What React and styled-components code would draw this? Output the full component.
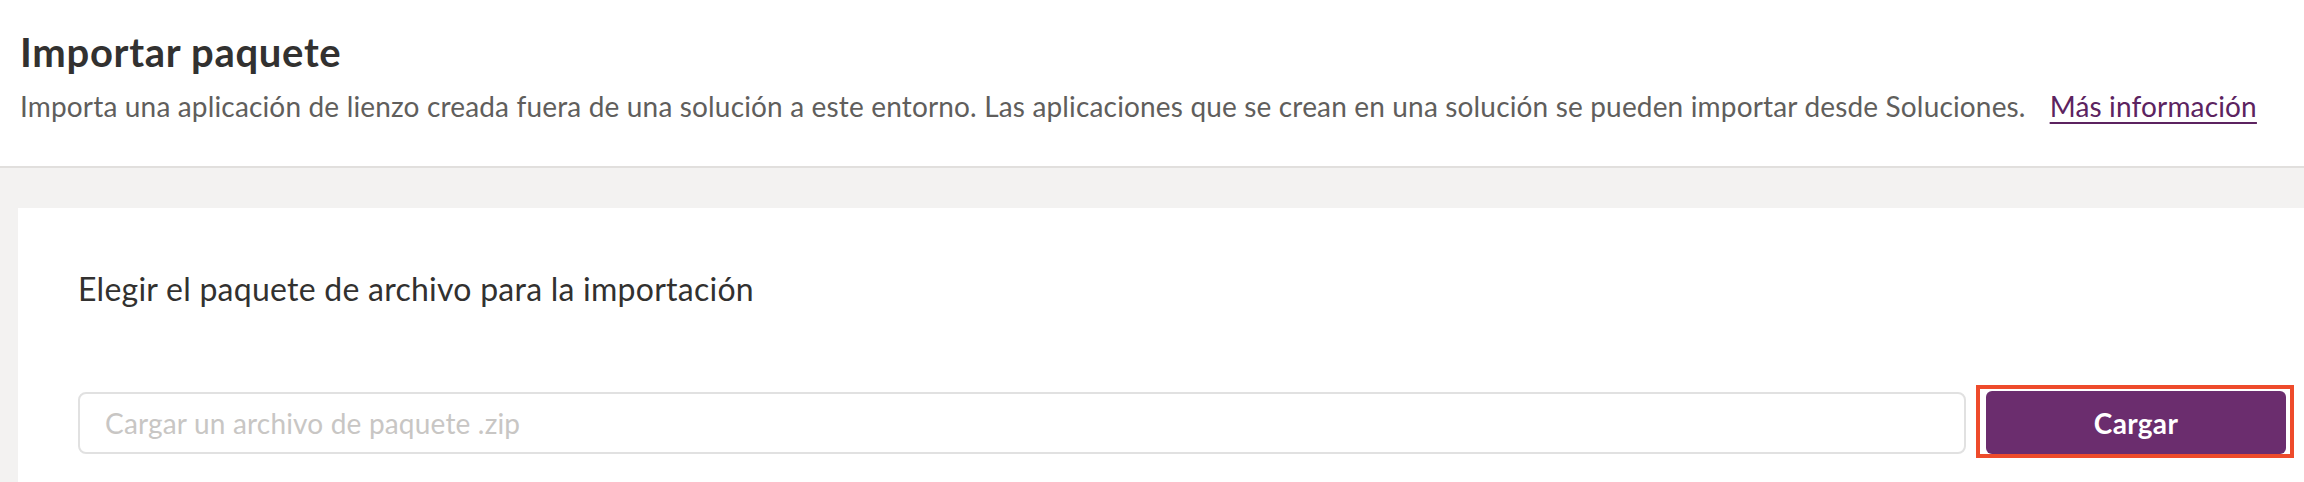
import styled, { createGlobalStyle } from "styled-components";

const GlobalStyle = createGlobalStyle`
  html, body {
    margin: 0;
    padding: 0;
    height: 482px;
    overflow: hidden;
    background: #f3f2f1;
    font-family: Lato, "Noto Sans", sans-serif;
  }
  * { box-sizing: border-box; }
`;

const Header = styled.header`
  background: #ffffff;
  border-bottom: 2px solid #e1dfdd;
  padding: 28px 20px 40px;
`;

const Title = styled.h1`
  margin: 0;
  font-size: 40px;
  line-height: 48px;
  font-weight: 700;
  letter-spacing: 0.7px;
  color: #323130;
`;

const Description = styled.p`
  margin: 10px 0 0;
  font-size: 28px;
  line-height: 40px;
  letter-spacing: 0.16px;
  color: #605e5c;
  white-space: nowrap;
`;

const MoreLink = styled.a`
  margin-left: 24px;
  color: #5c2360;
  text-decoration: underline;
  text-decoration-thickness: 2px;
  text-underline-offset: 5px;
`;

const Body = styled.main`
  padding: 40px 0 0 18px;
`;

const Card = styled.section`
  width: 2328px;
  min-height: 320px;
  background: #ffffff;
  padding: 59px 60px 60px;
`;

const Label = styled.h2`
  margin: 0 0 80px;
  font-size: 32px;
  line-height: 44px;
  font-weight: 400;
  letter-spacing: 0.25px;
  color: #323130;
`;

const Row = styled.div`
  display: flex;
  align-items: center;
  gap: 20px;
`;

const FileInput = styled.input`
  flex: 1;
  height: 62px;
  border: 2px solid #e1e1e1;
  border-radius: 8px;
  padding: 0 25px;
  font-family: inherit;
  font-size: 28px;
  letter-spacing: 0.18px;
  color: #323130;
  outline: none;

  &::placeholder {
    color: #c8c6c4;
  }
`;

const Highlight = styled.div`
  position: relative;
  display: flex;

  &::after {
    content: "";
    position: absolute;
    top: -6px;
    bottom: -4px;
    left: -10px;
    right: -8px;
    border: 4px solid #ee4b2b;
    pointer-events: none;
  }
`;

const UploadButton = styled.button`
  width: 300px;
  height: 63px;
  border: none;
  border-radius: 6px;
  background: #6b2d6e;
  color: #ffffff;
  font-family: inherit;
  font-size: 28px;
  font-weight: 700;
  letter-spacing: 0.3px;
  cursor: pointer;
`;

export default function App() {
  return (
    <>
      <GlobalStyle />
      <Header>
        <Title>Importar paquete</Title>
        <Description>
          Importa una aplicación de lienzo creada fuera de una solución a este
          entorno. Las aplicaciones que se crean en una solución se pueden
          importar desde Soluciones.
          <MoreLink href="#">Más información</MoreLink>
        </Description>
      </Header>
      <Body>
        <Card>
          <Label>Elegir el paquete de archivo para la importación</Label>
          <Row>
            <FileInput placeholder="Cargar un archivo de paquete .zip" />
            <Highlight>
              <UploadButton>Cargar</UploadButton>
            </Highlight>
          </Row>
        </Card>
      </Body>
    </>
  );
}
